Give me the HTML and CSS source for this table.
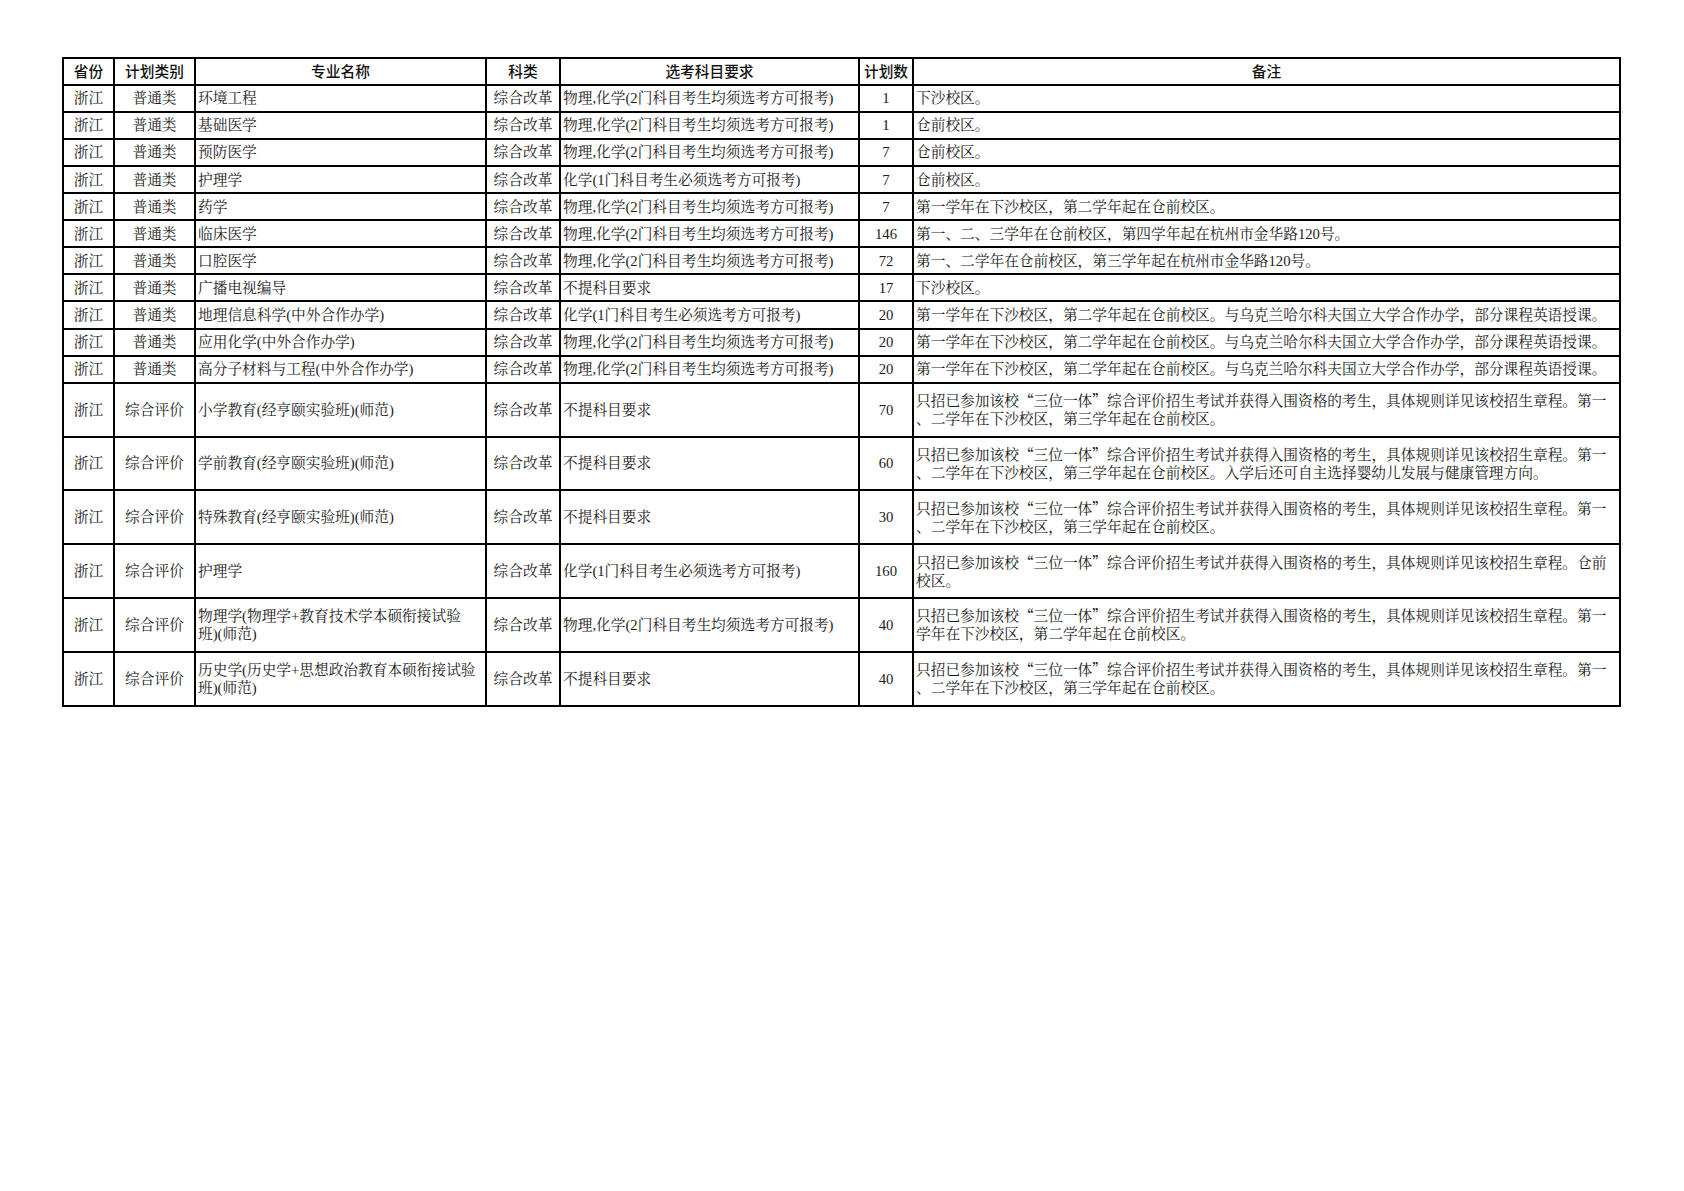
FILE: index.html
```html
<!DOCTYPE html>
<html lang="zh-CN">
<head>
<meta charset="utf-8">
<title>招生计划</title>
<link rel="stylesheet" href="styles.css">
</head>
<body>
<div class="page">
<table class="plan">
  <colgroup>
    <col class="c-prov"><col class="c-type"><col class="c-major"><col class="c-cat"><col class="c-req"><col class="c-num"><col class="c-note">
  </colgroup>
  <thead>
    <tr class="head">
      <th>省份</th><th>计划类别</th><th>专业名称</th><th>科类</th><th>选考科目要求</th><th>计划数</th><th>备注</th>
    </tr>
  </thead>
  <tbody>
    <tr class="r1"><td class="ctr">浙江</td><td class="ctr">普通类</td><td>环境工程</td><td class="ctr">综合改革</td><td>物理,化学(2门科目考生均须选考方可报考)</td><td class="ctr">1</td><td>下沙校区。</td></tr>
    <tr class="r1"><td class="ctr">浙江</td><td class="ctr">普通类</td><td>基础医学</td><td class="ctr">综合改革</td><td>物理,化学(2门科目考生均须选考方可报考)</td><td class="ctr">1</td><td>仓前校区。</td></tr>
    <tr class="r1"><td class="ctr">浙江</td><td class="ctr">普通类</td><td>预防医学</td><td class="ctr">综合改革</td><td>物理,化学(2门科目考生均须选考方可报考)</td><td class="ctr">7</td><td>仓前校区。</td></tr>
    <tr class="r1"><td class="ctr">浙江</td><td class="ctr">普通类</td><td>护理学</td><td class="ctr">综合改革</td><td>化学(1门科目考生必须选考方可报考)</td><td class="ctr">7</td><td>仓前校区。</td></tr>
    <tr class="r1"><td class="ctr">浙江</td><td class="ctr">普通类</td><td>药学</td><td class="ctr">综合改革</td><td>物理,化学(2门科目考生均须选考方可报考)</td><td class="ctr">7</td><td>第一学年在下沙校区，第二学年起在仓前校区。</td></tr>
    <tr class="r1"><td class="ctr">浙江</td><td class="ctr">普通类</td><td>临床医学</td><td class="ctr">综合改革</td><td>物理,化学(2门科目考生均须选考方可报考)</td><td class="ctr">146</td><td>第一、二、三学年在仓前校区，第四学年起在杭州市金华路120号。</td></tr>
    <tr class="r1"><td class="ctr">浙江</td><td class="ctr">普通类</td><td>口腔医学</td><td class="ctr">综合改革</td><td>物理,化学(2门科目考生均须选考方可报考)</td><td class="ctr">72</td><td>第一、二学年在仓前校区，第三学年起在杭州市金华路120号。</td></tr>
    <tr class="r1"><td class="ctr">浙江</td><td class="ctr">普通类</td><td>广播电视编导</td><td class="ctr">综合改革</td><td>不提科目要求</td><td class="ctr">17</td><td>下沙校区。</td></tr>
    <tr class="r1"><td class="ctr">浙江</td><td class="ctr">普通类</td><td>地理信息科学(中外合作办学)</td><td class="ctr">综合改革</td><td>化学(1门科目考生必须选考方可报考)</td><td class="ctr">20</td><td>第一学年在下沙校区，第二学年起在仓前校区。与乌克兰哈尔科夫国立大学合作办学，部分课程英语授课。</td></tr>
    <tr class="r1"><td class="ctr">浙江</td><td class="ctr">普通类</td><td>应用化学(中外合作办学)</td><td class="ctr">综合改革</td><td>物理,化学(2门科目考生均须选考方可报考)</td><td class="ctr">20</td><td>第一学年在下沙校区，第二学年起在仓前校区。与乌克兰哈尔科夫国立大学合作办学，部分课程英语授课。</td></tr>
    <tr class="r1"><td class="ctr">浙江</td><td class="ctr">普通类</td><td>高分子材料与工程(中外合作办学)</td><td class="ctr">综合改革</td><td>物理,化学(2门科目考生均须选考方可报考)</td><td class="ctr">20</td><td>第一学年在下沙校区，第二学年起在仓前校区。与乌克兰哈尔科夫国立大学合作办学，部分课程英语授课。</td></tr>
    <tr class="r2"><td class="ctr">浙江</td><td class="ctr">综合评价</td><td>小学教育(经亨颐实验班)(师范)</td><td class="ctr">综合改革</td><td>不提科目要求</td><td class="ctr">70</td><td>只招已参加该校<span class="q">“</span>三位一体<span class="q">”</span>综合评价招生考试并获得入围资格的考生，具体规则详见该校招生章程。第一<br>、二学年在下沙校区，第三学年起在仓前校区。</td></tr>
    <tr class="r2"><td class="ctr">浙江</td><td class="ctr">综合评价</td><td>学前教育(经亨颐实验班)(师范)</td><td class="ctr">综合改革</td><td>不提科目要求</td><td class="ctr">60</td><td>只招已参加该校<span class="q">“</span>三位一体<span class="q">”</span>综合评价招生考试并获得入围资格的考生，具体规则详见该校招生章程。第一<br>、二学年在下沙校区，第三学年起在仓前校区。入学后还可自主选择婴幼儿发展与健康管理方向。</td></tr>
    <tr class="r2"><td class="ctr">浙江</td><td class="ctr">综合评价</td><td>特殊教育(经亨颐实验班)(师范)</td><td class="ctr">综合改革</td><td>不提科目要求</td><td class="ctr">30</td><td>只招已参加该校<span class="q">“</span>三位一体<span class="q">”</span>综合评价招生考试并获得入围资格的考生，具体规则详见该校招生章程。第一<br>、二学年在下沙校区，第三学年起在仓前校区。</td></tr>
    <tr class="r2"><td class="ctr">浙江</td><td class="ctr">综合评价</td><td>护理学</td><td class="ctr">综合改革</td><td>化学(1门科目考生必须选考方可报考)</td><td class="ctr">160</td><td>只招已参加该校<span class="q">“</span>三位一体<span class="q">”</span>综合评价招生考试并获得入围资格的考生，具体规则详见该校招生章程。仓前<br>校区。</td></tr>
    <tr class="r2"><td class="ctr">浙江</td><td class="ctr">综合评价</td><td>物理学(物理学+教育技术学本硕衔接试验<br>班)(师范)</td><td class="ctr">综合改革</td><td>物理,化学(2门科目考生均须选考方可报考)</td><td class="ctr">40</td><td>只招已参加该校<span class="q">“</span>三位一体<span class="q">”</span>综合评价招生考试并获得入围资格的考生，具体规则详见该校招生章程。第一<br>学年在下沙校区，第二学年起在仓前校区。</td></tr>
    <tr class="r2"><td class="ctr">浙江</td><td class="ctr">综合评价</td><td>历史学(历史学+思想政治教育本硕衔接试验<br>班)(师范)</td><td class="ctr">综合改革</td><td>不提科目要求</td><td class="ctr">40</td><td>只招已参加该校<span class="q">“</span>三位一体<span class="q">”</span>综合评价招生考试并获得入围资格的考生，具体规则详见该校招生章程。第一<br>、二学年在下沙校区，第三学年起在仓前校区。</td></tr>
  </tbody>
</table>
</div>
</body>
</html>
```

FILE: styles.css
```css
html, body {
  margin: 0;
  padding: 0;
  background: #ffffff;
}

.page {
  padding: 57px 0 0 62px;
}

.plan {
  border-collapse: collapse;
  table-layout: fixed;
  width: 1557px;
  font-family: "Liberation Serif", "Noto Serif CJK SC", "Noto Sans CJK SC", serif;
  font-size: 14.7px;
  line-height: 18px;
  color: #1a1a1a;
}

.c-prov { width: 51px; }
.c-type { width: 81px; }
.c-major { width: 291px; }
.c-cat { width: 74px; }
.c-req { width: 299px; }
.c-num { width: 54px; }
.c-note { width: 707px; }

.plan th,
.plan td {
  border: 2px solid #000;
  padding: 0 2px;
  vertical-align: middle;
  text-align: left;
  white-space: nowrap;
  overflow: hidden;
}

.plan th {
  font-family: "Noto Sans CJK SC", sans-serif;
  font-weight: 500;
  text-align: center;
  color: #111;
  padding: 0;
}

.plan .ctr {
  text-align: center;
  padding: 0;
}

.head { height: 26.7px; }
.r1 { height: 27.1px; }
.r2 { height: 53.8px; }

.q {
  font-family: "Noto Sans CJK SC", sans-serif;
}
```
